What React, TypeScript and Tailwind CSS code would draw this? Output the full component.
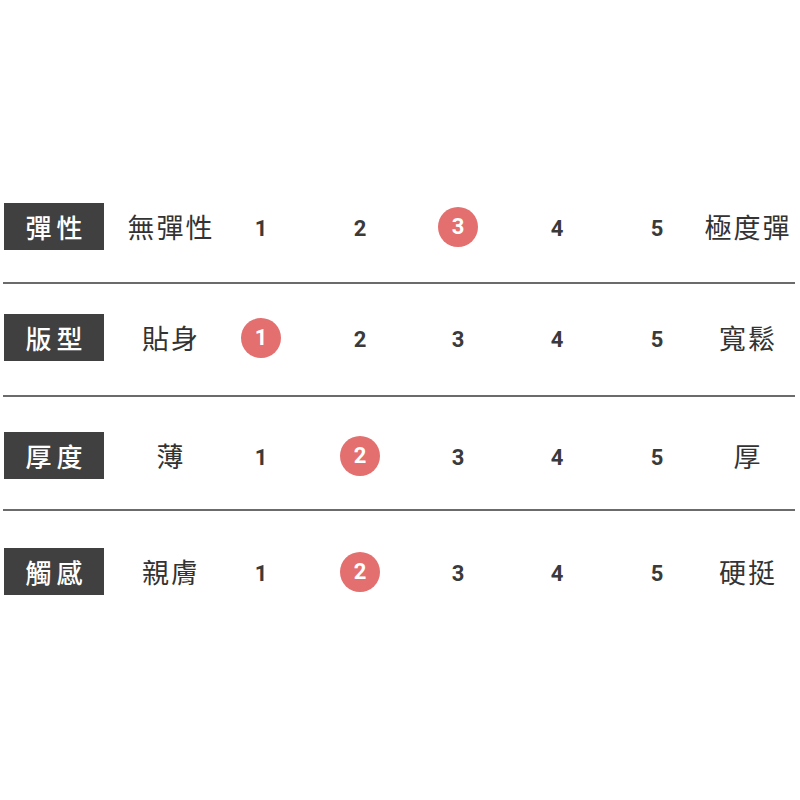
import React from "react";

/* ── Size chart rows ───────────────────────────────────────────── */
const ROWS = [
  { label: "彈性", low: "無彈性", high: "極度彈", value: 3, gap: "mt-[32px]" },
  { label: "版型", low: "貼身", high: "寬鬆", value: 1, gap: "mt-[30px]" },
  { label: "厚度", low: "薄", high: "厚", value: 2, gap: "mt-[35px]" },
  { label: "觸感", low: "親膚", high: "硬挺", value: 2, gap: "mt-[37px]" },
];

const LINE_GAPS = ["mt-[32px]", "mt-[34px]", "mt-[30px]"];

const NUM_OFFSETS = ["ml-[19px]", "ml-[59px]", "ml-[58px]", "ml-[59px]", "ml-[60px]"];

const cjk = "font-['Noto_Sans_CJK_TC','Noto_Sans_CJK_SC',sans-serif]";

function Row({ row }: { row: (typeof ROWS)[number] }) {
  return (
    <div className="flex h-[47px] items-center">
      <div
        className={`ml-[4px] flex h-[47px] w-[100px] shrink-0 items-center justify-center bg-[#404040] text-[26px] font-medium leading-none tracking-[5px] text-white ${cjk}`}
      >
        <span className="pl-[5px]">{row.label}</span>
      </div>
      <div
        className={`ml-[14px] w-[104px] shrink-0 whitespace-nowrap text-center text-[27px] leading-none tracking-[2px] text-[#333] ${cjk}`}
      >
        <span className="pl-[2px]">{row.low}</span>
      </div>
      {[1, 2, 3, 4, 5].map((n, i) => (
        <div key={n} className={`${NUM_OFFSETS[i]} flex w-[40px] shrink-0 items-center justify-center`}>
          {n === row.value ? (
            <span className="flex h-[40px] w-[40px] items-center justify-center rounded-full bg-[#e36f6f] font-['Roboto',sans-serif] text-[22px] font-bold text-white">
              {n}
            </span>
          ) : (
            <span className="pt-[4px] font-['Roboto',sans-serif] text-[22px] font-bold text-[#3a3a3a]">
              {n}
            </span>
          )}
        </div>
      ))}
      <div
        className={`ml-[18px] w-[104px] shrink-0 whitespace-nowrap text-center text-[27px] leading-none tracking-[2px] text-[#333] ${cjk}`}
      >
        <span className="pl-[2px]">{row.high}</span>
      </div>
    </div>
  );
}

export default function App() {
  return (
    <div className="h-[800px] w-[800px] overflow-hidden bg-white pt-[203px]">
      {ROWS.map((row, i) => (
        <React.Fragment key={row.label}>
          <div className={i === 0 ? "" : row.gap}>
            <Row row={row} />
          </div>
          {i < ROWS.length - 1 && (
            <div className={`${LINE_GAPS[i]} ml-[3px] h-[2px] w-[792px] bg-[#6b6b6b]`} />
          )}
        </React.Fragment>
      ))}
    </div>
  );
}
